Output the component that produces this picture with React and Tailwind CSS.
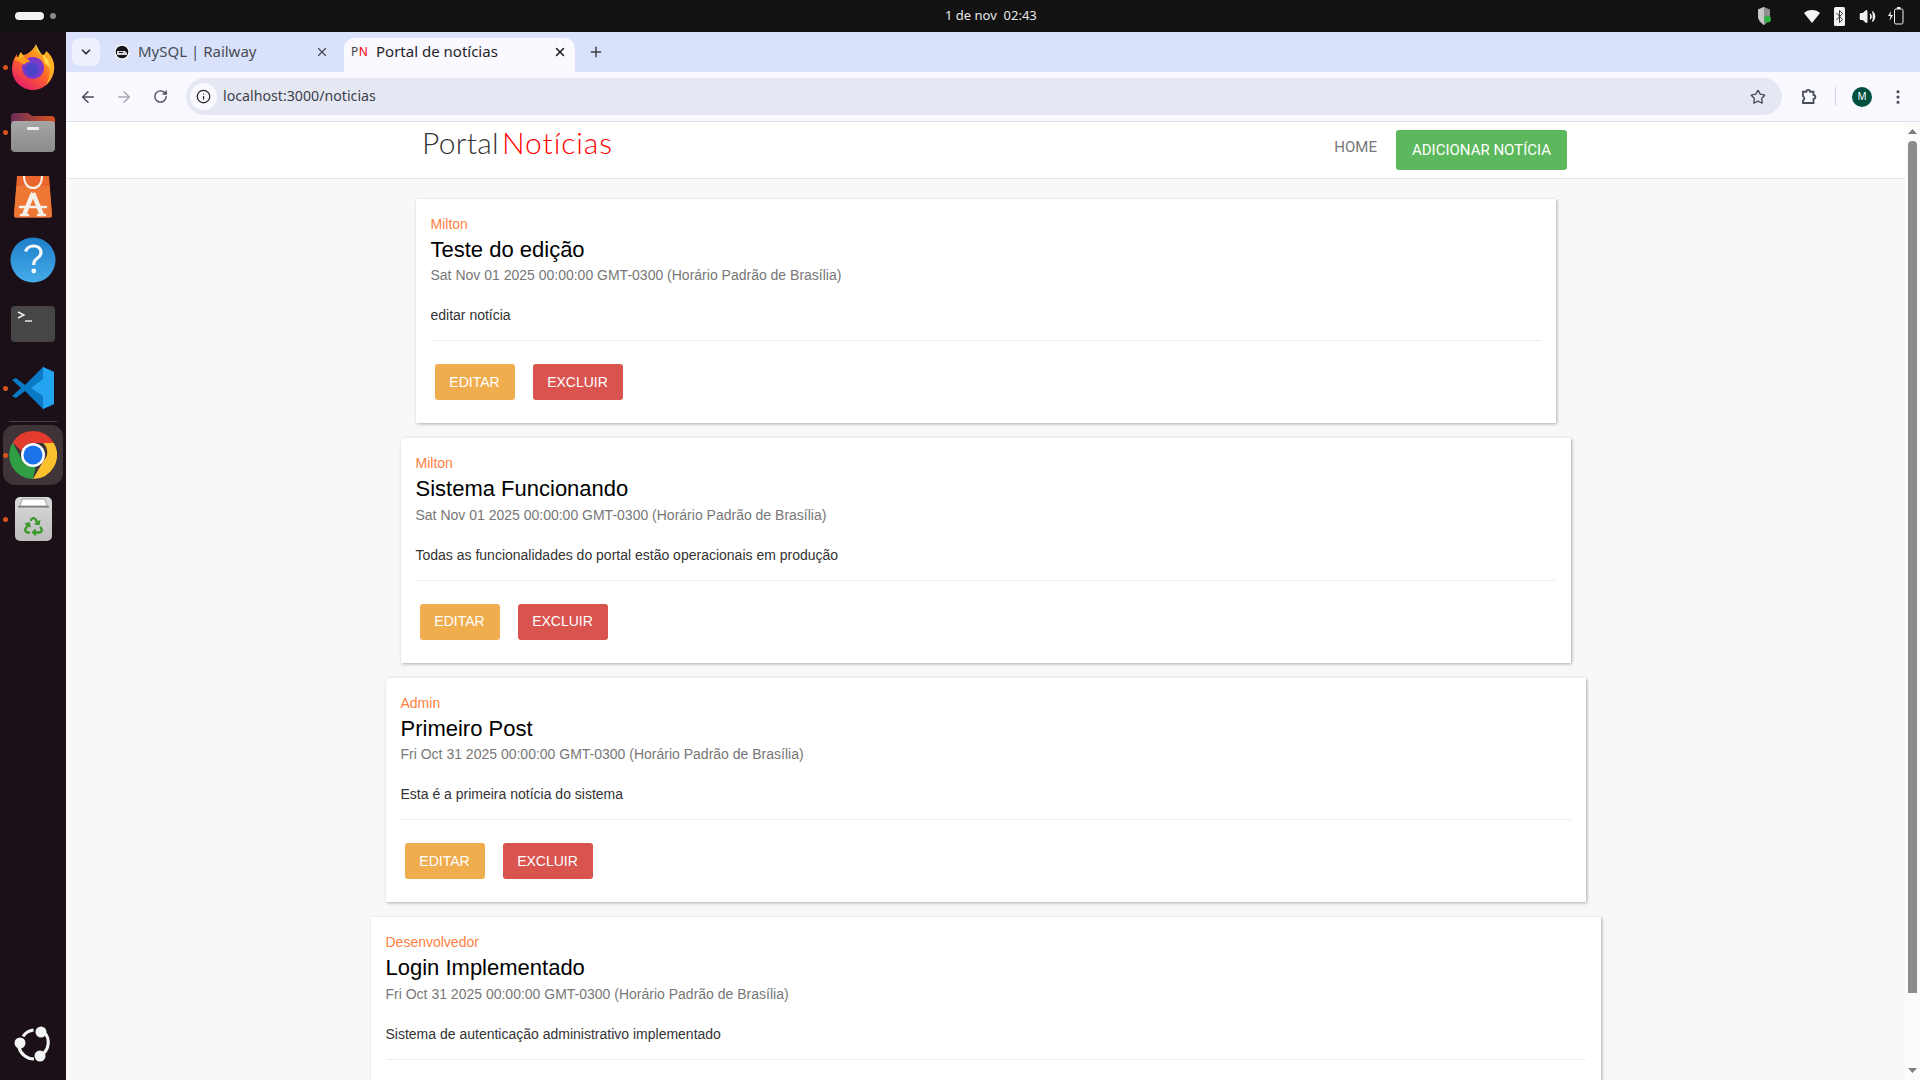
import React from 'react';
import { ArrowLeft, ArrowRight, RotateCw, ChevronDown, X, Plus, Info, Star, EllipsisVertical, Volume2 } from 'lucide-react';
import { FaRecycle } from 'react-icons/fa';

const noticias = [
  { autor: 'Milton', titulo: 'Teste do edição', data: 'Sat Nov 01 2025 00:00:00 GMT-0300 (Horário Padrão de Brasília)', texto: 'editar notícia', largura: 'w-[1140px]', acoes: true },
  { autor: 'Milton', titulo: 'Sistema Funcionando', data: 'Sat Nov 01 2025 00:00:00 GMT-0300 (Horário Padrão de Brasília)', texto: 'Todas as funcionalidades do portal estão operacionais em produção', largura: 'w-[1170px]', acoes: true },
  { autor: 'Admin', titulo: 'Primeiro Post', data: 'Fri Oct 31 2025 00:00:00 GMT-0300 (Horário Padrão de Brasília)', texto: 'Esta é a primeira notícia do sistema', largura: 'w-[1200px]', acoes: true },
  { autor: 'Desenvolvedor', titulo: 'Login Implementado', data: 'Fri Oct 31 2025 00:00:00 GMT-0300 (Horário Padrão de Brasília)', texto: 'Sistema de autenticação administrativo implementado', largura: 'w-[1230px]', acoes: false },
];

function Firefox() {
  return (
    <svg width="44" height="48" viewBox="0 0 44 48">
      <defs>
        <linearGradient id="ffBody" x1="0.8" y1="0.1" x2="0.2" y2="1">
          <stop offset="0" stopColor="#ffc01f" />
          <stop offset="0.45" stopColor="#ff6a26" />
          <stop offset="1" stopColor="#e3176f" />
        </linearGradient>
        <radialGradient id="ffGlobe" cx="0.5" cy="0.5" r="0.6">
          <stop offset="0" stopColor="#5a49d0" />
          <stop offset="1" stopColor="#8d2fc4" />
        </radialGradient>
      </defs>
      <path d="M25 1c-1 5 2 8 7 11 2-1 3-3 3-4 6 5 9 12 8 19-1 11-10 20-21 20S1 38 1 26C1 20 3 15 6 11c0 2 1 4 2 5 2-3 5-4 8-5 3-2 7-5 9-10z" fill="url(#ffBody)" />
      <path d="M25 1c-1 6 3 9 8 12 6 5 8 10 7 16-1-4-3-7-6-9-1-8-7-12-9-19z" fill="#ffe14d" />
      <path d="M35 8c6 5 9 12 8 19-1 6-4 11-8 15 3-6 5-14 3-21-1-5-2-9-3-13z" fill="#ffb027" />
      <circle cx="22" cy="25" r="11" fill="url(#ffGlobe)" />
      <circle cx="21" cy="27" r="6.500" fill="#4d44c9" />
      <path d="M3 16c3-2 6-3 10-2 3 1 5 3 6 5-3 0-5 1-6 3-3-3-7-4-10-6z" fill="#ff9a1f" />
      <path d="M10 9c1 2 2 3 4 4l-6 3c-1-2 0-5 2-7z" fill="#ffb527" />
    </svg>
  );
}

function Files() {
  return (
    <svg width="46" height="42" viewBox="0 0 46 42">
      <defs>
        <linearGradient id="filesTab" x1="0" y1="0" x2="1" y2="0">
          <stop offset="0" stopColor="#6b2e5a" />
          <stop offset="1" stopColor="#d9531e" />
        </linearGradient>
        <linearGradient id="filesBody" x1="0" y1="0" x2="0" y2="1">
          <stop offset="0" stopColor="#a6a6a6" />
          <stop offset="1" stopColor="#8b8b8b" />
        </linearGradient>
      </defs>
      <path d="M1 6a4 4 0 0 1 4-4h13l4 3h19a4 4 0 0 1 4 4v10H1z" fill="url(#filesTab)" />
      <rect x="1" y="10" width="44" height="31" rx="4" fill="url(#filesBody)" />
      <rect x="17" y="16" width="12" height="3" rx="1" fill="#eeeeee" />
    </svg>
  );
}

function AppCenter() {
  return (
    <svg width="38" height="44" viewBox="0 0 38 44">
      <path d="M3 2h32l3 39a2 2 0 0 1-2 2.500H2A2 2 0 0 1 0 41z" fill="#e9662c" />
      <path d="M2.500 12h33l2.500 29a2 2 0 0 1-2 2.500H2A2 2 0 0 1 0 41z" fill="#ef7736" />
      <path d="M10 2c0 8 4 12 9 12s9-4 9-12" fill="none" stroke="#f6f0ea" strokeWidth="2" />
      <path d="M19 19 10 41M19 19l9 22" fill="none" stroke="#f6f0ea" strokeWidth="4.500" />
      <path d="M6 33h26M7 41h7M24 41h7" fill="none" stroke="#f6f0ea" strokeWidth="2.600" strokeLinecap="round" />
    </svg>
  );
}

function Ajuda() {
  return (
    <svg width="46" height="46" viewBox="0 0 46 46">
      <defs>
        <linearGradient id="ajuda" x1="0" y1="0" x2="0" y2="1">
          <stop offset="0" stopColor="#1f7fca" />
          <stop offset="1" stopColor="#45ace8" />
        </linearGradient>
      </defs>
      <circle cx="23" cy="23" r="22.500" fill="url(#ajuda)" />
      <path d="M15.500 14.500C17 10.500 20 9 23.500 9c4.500 0 7.500 2.700 7.500 6.300 0 3-1.700 4.700-4 6.200-2 1.300-3.200 2.500-3.200 5.500v1" fill="none" stroke="#f4f8fb" strokeWidth="3.200" />
      <circle cx="23.800" cy="34" r="2.400" fill="#f4f8fb" />
    </svg>
  );
}

function Terminal() {
  return (
    <svg width="44" height="36" viewBox="0 0 44 36">
      <rect width="44" height="36" rx="4" fill="#464646" />
      <path d="M7 6l6 3-6 3" fill="none" stroke="#f2f2f2" strokeWidth="1.400" />
      <path d="M14 15h7" stroke="#f2f2f2" strokeWidth="1.400" />
    </svg>
  );
}

function VsCode() {
  return (
    <svg width="44" height="44" viewBox="0 0 44 44">
      <path d="M32 1 14 19 5 12 1 14l9 8-9 8 4 2 9-7 18 18 11-5V6z" fill="#0a7ac4" />
      <path d="M32 1l11 5v32l-11 5V30L20 22l12-9z" fill="#23a3f0" />
    </svg>
  );
}

function Chrome() {
  return (
    <svg width="48" height="48" viewBox="0 0 48 48">
      <path d="M24 0a24 24 0 0 1 20.800 12H24a12 12 0 0 0-11.400 8.300L3.600 11.500A24 24 0 0 1 24 0z" fill="#e33b2e" />
      <path d="M44.800 12A24 24 0 0 1 24 48l10.400-18a12 12 0 0 0-.4-18z" fill="#fbc02d" />
      <path d="M24 48A24 24 0 0 1 3.600 11.500L13.600 30a12 12 0 0 0 13 5.800z" fill="#2f9e44" />
      <circle cx="24" cy="24" r="12" fill="#ffffff" />
      <circle cx="24" cy="24" r="9.500" fill="#1a73e8" />
    </svg>
  );
}

function Lixeira() {
  return (
    <div className="relative h-[44px] w-[37px] rounded-[5px] bg-gradient-to-b from-[#dadada] to-[#bdbdbd]">
      <svg className="absolute left-[2px] top-0" width="33" height="12" viewBox="0 0 33 12">
        <path d="M3 9 5 2h23l2 7z" fill="#ffffff" stroke="#8a8a8a" strokeWidth="0.800" />
        <rect x="1" y="9" width="31" height="1.500" fill="#7d7d7d" />
      </svg>
      <FaRecycle className="absolute left-[9px] top-[20px] text-[#3a9a2a]" size={19} />
    </div>
  );
}

function Ubuntu() {
  return (
    <svg width="38" height="38" viewBox="0 0 38 38">
      <g fill="none" stroke="#f5f5f5" strokeWidth="3">
        <path d="M9 11.500A14.500 14.500 0 0 1 19.500 5" />
        <path d="M31.500 8.500A15.500 15.500 0 0 1 30 28" />
        <path d="M5 22.500A15.500 15.500 0 0 0 20 34" />
      </g>
      <circle cx="27" cy="7" r="5.500" fill="#f5f5f5" />
      <circle cx="6" cy="18" r="5.500" fill="#f5f5f5" />
      <circle cx="26" cy="31" r="5.500" fill="#f5f5f5" />
    </svg>
  );
}

function DockItem({ children, aberto, className }) {
  return (
    <div className={`relative flex items-center justify-center ${className}`}>
      {aberto && <span className="absolute left-[3px] top-1/2 -mt-[2.500px] h-[5px] w-[5px] rounded-full bg-[#d9531e]" />}
      {children}
    </div>
  );
}

function Dock() {
  return (
    <aside className="flex w-[66px] shrink-0 flex-col items-stretch bg-[#1b1017]">
      <DockItem aberto className="mt-[10px] h-[50px]"><Firefox /></DockItem>
      <DockItem aberto className="mt-[19px] h-[42px]"><Files /></DockItem>
      <DockItem className="mt-[20px] h-[46px]"><AppCenter /></DockItem>
      <DockItem className="mt-[18px] h-[46px]"><Ajuda /></DockItem>
      <DockItem className="mt-[23px] h-[36px]"><Terminal /></DockItem>
      <DockItem aberto className="mt-[24px] h-[44px]"><VsCode /></DockItem>
      <div className="mx-[9px] mt-[11px] h-px bg-[#4a4045]" />
      <DockItem aberto className="mx-[3px] mt-[3px] h-[60px] rounded-xl bg-[#3f3539] [&>span]:left-0"><Chrome /></DockItem>
      <DockItem aberto className="mt-[11px] h-[46px]"><Lixeira /></DockItem>
      <DockItem className="mt-auto mb-[17px] h-[38px]"><Ubuntu /></DockItem>
    </aside>
  );
}

function BarraTopo() {
  return (
    <header className="relative flex h-8 shrink-0 items-center bg-[#121212] px-[15px] font-['Noto_Sans',sans-serif] text-white">
      <div className="h-[8px] w-[29px] rounded-full bg-[#f2f2f2]" />
      <div className="ml-[6px] h-[6px] w-[6px] rounded-full bg-[#8a8a8a]" />
      <span className="absolute left-[945px] top-[5px] whitespace-pre text-[13px] leading-[20px] text-[#e8e8e8]">1 de nov  02:43</span>
      <div className="ml-auto mr-[1px] flex items-center">
        <svg width="15" height="18" viewBox="0 0 15 18">
          <path d="M7 0 13 2.500V9c0 4-3 7-6 9-3-2-6-5-6-9V2.500z" fill="#8f8f8f" />
          <path d="M7 0v18c-3-2-6-5-6-9V2.500z" fill="#c8c8c8" />
          <circle cx="10.500" cy="12" r="3.500" fill="#2fb344" />
        </svg>
        <svg className="ml-[32px]" width="16" height="13" viewBox="0 0 16 13"><path d="M0 3C2 1 5 0 8 0s6 1 8 3l-8 10z" fill="#f5f5f5" /></svg>
        <svg className="ml-[14px]" width="11" height="19" viewBox="0 0 11 19">
          <rect width="11" height="19" rx="1.500" fill="#f2f2f2" />
          <path d="M2.500 6l6 6.500-3 3v-12l3 3-6 6.500" fill="none" stroke="#222" strokeWidth="0.900" />
        </svg>
        <Volume2 className="ml-[14px] text-[#f2f2f2]" size={17} fill="#f2f2f2" />
        <svg className="ml-[12px]" width="16" height="18" viewBox="0 0 16 18">
          <path d="M3 4 0 9h2.500L1.500 14 5 8H2.500z" fill="#f2f2f2" />
          <rect x="6.500" y="2" width="8.500" height="15" rx="1.500" fill="none" stroke="#f2f2f2" />
          <rect x="9" y="0" width="3.500" height="2" fill="#f2f2f2" />
        </svg>
      </div>
    </header>
  );
}

function Navegador() {
  return (
    <div className="shrink-0 font-['Noto_Sans',sans-serif]">
      <div className="flex h-10 items-end bg-[#d9e2fa] pl-[6px]">
        <div className="mb-[6px] flex h-[28px] w-[28px] items-center justify-center rounded-lg bg-[#edf1fd] text-[#2a2f3a]">
          <ChevronDown size={14} strokeWidth={3} />
        </div>
        <div className="mb-[6px] flex h-[28px] w-[244px] items-center pb-[1px] pl-[14px] pr-[15px] text-[15px] text-[#474c57]">
          <svg width="16" height="16" viewBox="0 0 16 16" className="mr-[8px] shrink-0">
            <circle cx="8" cy="8" r="7.500" fill="#ffffff" />
            <circle cx="8" cy="8" r="6.300" fill="#16161c" />
            <path d="M3 7h8l2 2v2H3z" fill="#d8d8d8" />
            <path d="M5 8h4v1H5z" fill="#16161c" />
          </svg>
          <span>MySQL | Railway</span>
          <X className="ml-auto text-[#474c57]" size={14} strokeWidth={2.200} />
        </div>
        <div className="flex h-[34px] w-[231px] items-center rounded-t-[10px] bg-[#f9f9ff] pb-[7px] pl-[7px] pr-[8px] text-[15px] text-[#1f2328]">
          <span className="mr-[9px] w-[16px] shrink-0 text-[12px] leading-none tracking-[0.5px]"><span className="text-[#444]">P</span><span className="text-[#f00]">N</span></span>
          <span>Portal de notícias</span>
          <X className="ml-auto text-[#1f2328]" size={14} strokeWidth={2.600} />
        </div>
        <div className="mb-[6px] ml-[1px] flex h-[28px] w-[40px] items-center justify-center text-[#3b404a]">
          <Plus size={16} strokeWidth={2.200} />
        </div>
      </div>
      <div className="flex h-[50px] items-center border-b border-[#dfe1ea] bg-[#f9f9ff] pl-[13px] pr-[6px]">
        <ArrowLeft size={18} strokeWidth={2} className="text-[#474c57]" />
        <ArrowRight size={18} strokeWidth={2} className="ml-[18px] text-[#a9acb4]" />
        <RotateCw size={15} strokeWidth={2.200} className="ml-[20px] text-[#474c57]" />
        <div className="ml-[18px] flex h-[37px] w-[1596px] items-center rounded-full bg-[#e5e8f3] pl-[4px] pr-[16px]">
          <div className="flex h-[27px] w-[27px] items-center justify-center rounded-full bg-[#f9f9ff]">
            <Info size={15} strokeWidth={2} className="text-[#1f2328]" />
          </div>
          <span className="ml-[6px] pb-[1px] text-[14.2px] text-[#3b404a]">localhost:3000/noticias</span>
          <Star size={16} strokeWidth={2} className="ml-auto text-[#474c57]" />
        </div>
        <svg className="ml-[18px] text-[#474c57]" width="18" height="18" viewBox="0 0 24 24" fill="none" stroke="currentColor" strokeWidth="2.400">
          <path d="M4 5h4.500a2.500 2.500 0 0 1 5 0H18v4.500a2.500 2.500 0 0 1 0 5V20H4v-3.500a3 3 0 0 0 0-5.500z" />
        </svg>
        <div className="ml-[17px] h-[19px] w-px bg-[#cfd6ea]" />
        <div className="ml-[16px] flex h-[20px] w-[20px] items-center justify-center rounded-full bg-[#00503f] text-[10px] text-white">M</div>
        <EllipsisVertical size={18} strokeWidth={2.200} className="ml-[17px] text-[#474c57]" />
      </div>
    </div>
  );
}

function CartaoNoticia({ n }) {
  return (
    <article className={`${n.largura} mx-auto h-[224.5px] shrink-0 bg-white p-[15px] shadow-[1px_1px_3px_rgba(0,0,0,0.3)]`}>
      <p className="text-[14px] leading-[20px] text-[#ff7f3f]">{n.autor}</p>
      <h2 className="text-[22px] leading-[31.2px] text-black">{n.titulo}</h2>
      <p className="text-[14px] leading-[20px] text-[#777]">{n.data}</p>
      <p className="mt-[20px] text-[14px] leading-[20px] text-[#333]">{n.texto}</p>
      <hr className="mt-[15px] border-[#eee]" />
      {n.acoes && (
        <div className="mt-[23px] flex gap-[18px] pl-[4px]">
          <button className="h-[36px] w-[80px] rounded-[3px] bg-[#f0ad4e] text-[14px] text-white">EDITAR</button>
          <button className="h-[36px] w-[90px] rounded-[3px] bg-[#d9534f] text-[14px] text-white">EXCLUIR</button>
        </div>
      )}
    </article>
  );
}

function Scrollbar() {
  return (
    <div className="flex w-[15px] shrink-0 flex-col items-center bg-[#fbfbfb]">
      <svg className="mt-[7px]" width="9" height="5" viewBox="0 0 9 5"><path d="M4.500 0 9 5H0z" fill="#7d7d7d" /></svg>
      <div className="ml-[-1px] mt-[7px] h-[852px] w-[9px] rounded-t-[4px] bg-[#8c8c8c]" />
      <svg className="mt-auto mb-[7px]" width="9" height="5" viewBox="0 0 9 5"><path d="M4.500 5 9 0H0z" fill="#7d7d7d" /></svg>
    </div>
  );
}

export default function App() {
  return (
    <div className="flex h-screen w-screen flex-col overflow-hidden bg-[#f8f8f8] font-['Liberation_Sans',sans-serif]">
      <BarraTopo />
      <div className="flex min-h-0 flex-1">
        <Dock />
        <div className="flex min-w-0 flex-1 flex-col">
          <Navegador />
          <div className="flex min-h-0 flex-1">
            <main className="min-w-0 flex-1 overflow-hidden">
              <nav className="flex h-[57px] items-start border-b border-[#e7e7e7] bg-white pl-[356px]">
                <div className="mt-[2px] font-['Lato',sans-serif] text-[30px] font-light leading-[36px]">
                  <span className="tracking-[0.3px] text-[#333]">Portal</span><span className="ml-[3px] tracking-[0.9px] text-[#f00]">Notícias</span>
                </div>
                <a className="ml-auto mt-[15px] font-['Roboto',sans-serif] text-[15px] leading-[20px] text-[#777]">HOME</a>
                <button className="ml-[19px] mr-[338px] mt-[8px] h-[40px] w-[171px] rounded-[3px] bg-[#5cb85c] font-['Roboto',sans-serif] text-[15px] text-white">ADICIONAR NOTÍCIA</button>
              </nav>
              <div className="flex flex-col gap-[15px] pt-[19.9px]">
                {noticias.map((n) => <CartaoNoticia key={n.titulo} n={n} />)}
              </div>
            </main>
            <Scrollbar />
          </div>
        </div>
      </div>
    </div>
  );
}
